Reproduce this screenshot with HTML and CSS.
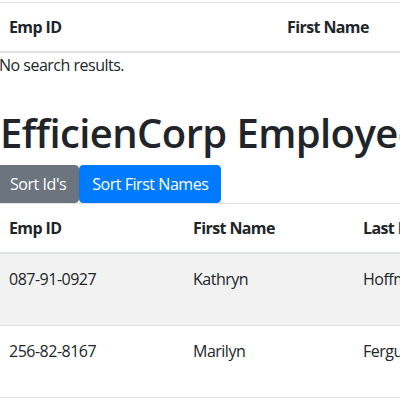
FILE: index.html
```html
<!DOCTYPE html>
<html>
<head>
<meta charset="utf-8">
<link rel="stylesheet" href="styles.css">
</head>
<body>
<div class="page">
  <table class="table table-search">
    <colgroup><col class="c-id1"><col class="c-fn1"><col></colgroup>
    <thead>
      <tr><th>Emp ID</th><th>First Name</th><th>Last Name</th></tr>
    </thead>
  </table>
  <div class="empty">No search results.</div>

  <h1 class="title">EfficienCorp Employees</h1>
  <div class="btns">
    <button class="btn btn-gray">Sort Id's</button><button class="btn btn-blue">Sort First Names</button>
  </div>
  <table class="table table-main">
    <colgroup><col class="c-id2"><col class="c-fn2"><col></colgroup>
    <thead>
      <tr><th>Emp ID</th><th>First Name</th><th>Last Name</th></tr>
    </thead>
    <tbody>
      <tr class="odd"><td>087-91-0927</td><td>Kathryn</td><td>Hoffman</td></tr>
      <tr><td>256-82-8167</td><td>Marilyn</td><td>Ferguson</td></tr>
    </tbody>
  </table>
</div>
</body>
</html>
```
FILE: styles.css
```css
html, body {
  margin: 0;
  padding: 0;
  overflow: hidden;
  background: #fff;
}
body {
  font-family: "Open Sans", "Noto Sans", sans-serif;
  font-size: 16px;
  line-height: 24px;
  letter-spacing: -0.5px;
  color: #212529;
}
.page {
  width: 800px;
  margin-left: -3px;
  padding-top: 2px;
}
.table {
  border-collapse: collapse;
  table-layout: fixed;
  width: 800px;
}
.table th, .table td {
  padding: 12px;
  text-align: left;
  vertical-align: top;
  border-top: 1px solid #dee2e6;
}
.table th {
  font-weight: 700;
  letter-spacing: -0.6px;
  border-bottom: 2px solid #dee2e6;
}
.table td {
  height: 47px;
  padding-top: 13px;
  padding-bottom: 11px;
}
.c-id1 { width: 278px; }
.c-fn1 { width: 300px; }
.c-id2 { width: 184px; }
.c-fn2 { width: 170px; }
.table-main tbody tr:last-child td { border-bottom: 1px solid #dee2e6; }
.odd td { background: #f2f2f2; }
.empty {
  padding-left: 2px;
}
.title {
  margin: 32px 0 8px 3px;
  font-size: 40px;
  line-height: 48px;
  font-weight: 600;
  letter-spacing: -0.6px;
  white-space: nowrap;
}
.title-text {
  display: block;
}
.btns {
  display: flex;
}
.btn {
  font-family: inherit;
  font-size: 16px;
  line-height: 24px;
  letter-spacing: -0.45px;
  padding: 6px 12px;
  border: 1px solid transparent;
  border-radius: 4px;
  color: #fff;
  margin: 0;
}
.btn-gray { background: #6c757d; border-color: #6c757d; }
.btn-blue { background: #007bff; border-color: #007bff; }
```
